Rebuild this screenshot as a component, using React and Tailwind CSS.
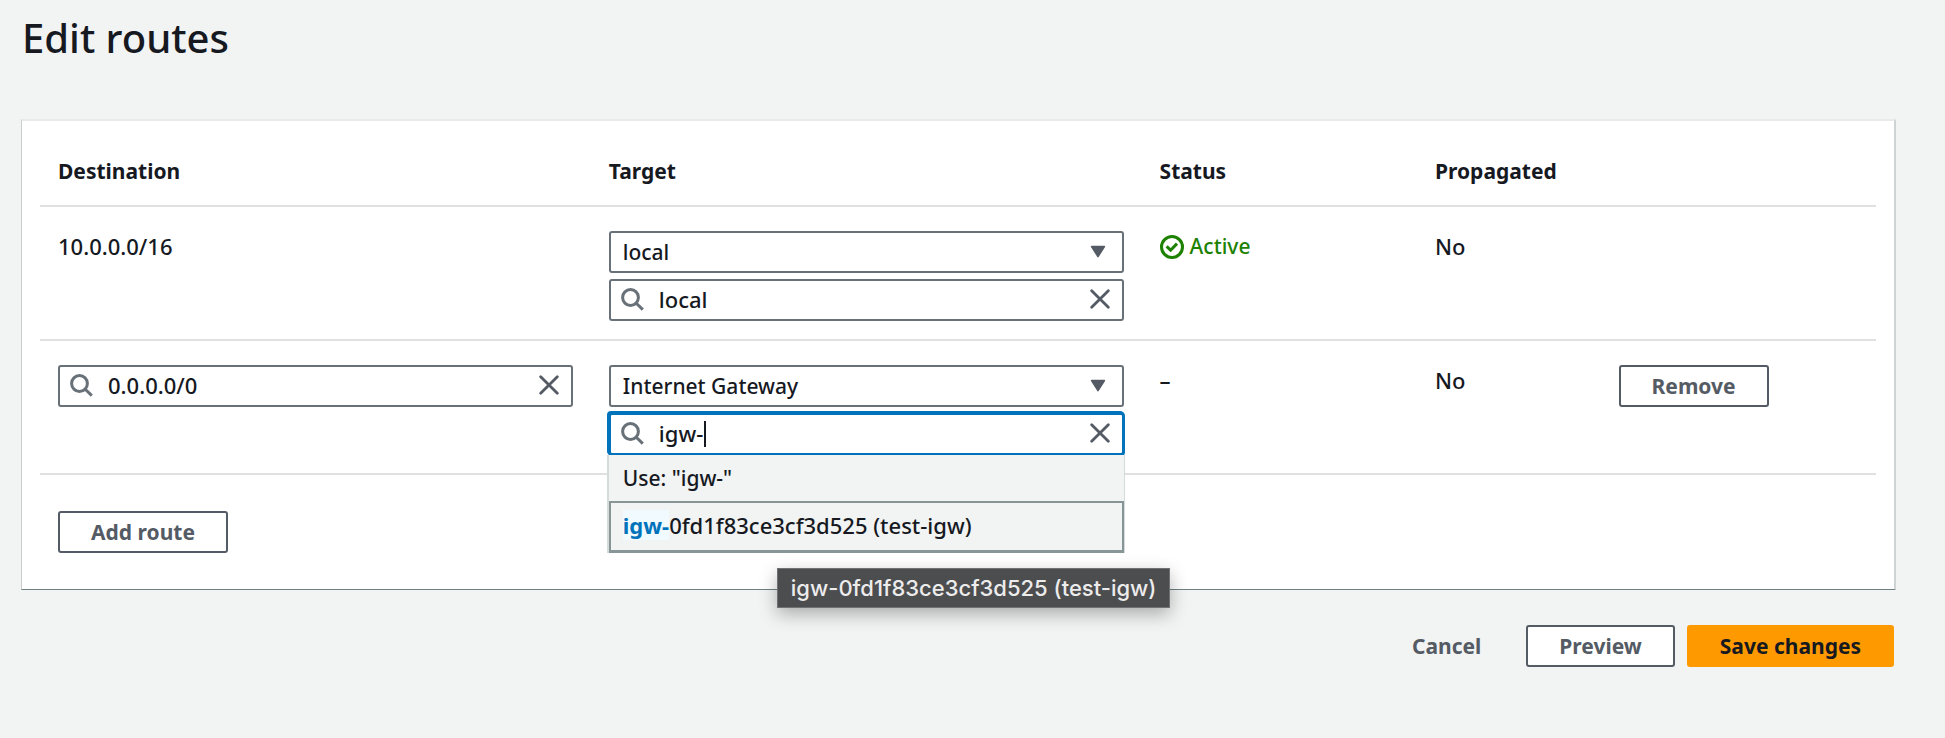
import { useState } from "react";

function SearchIcon() {
  return (
    <svg viewBox="0 0 23 24" className="h-6 w-[23px] shrink-0" fill="none" stroke="#687078" strokeWidth="3" aria-hidden="true">
      <circle cx="9.5" cy="9.5" r="7.9" />
      <path d="M15 15 L21.8 21.6" />
    </svg>
  );
}

function CloseIcon() {
  return (
    <svg viewBox="0 0 20 22" className="h-[22px] w-5" fill="none" stroke="#545b64" strokeWidth="2.8" strokeLinecap="round" aria-hidden="true">
      <path d="M1.7 1.7 L18.3 18.3 M18.3 1.7 L1.7 18.3" />
    </svg>
  );
}

function CaretDownIcon() {
  return (
    <svg viewBox="0 0 16 14" className="pointer-events-none h-3.5 w-4" aria-hidden="true">
      <path d="M1.6 1.6 H14.4 L8 11.6 Z" fill="#545b64" stroke="#545b64" strokeWidth="1.6" strokeLinejoin="round" />
    </svg>
  );
}

function CheckCircleIcon() {
  return (
    <svg viewBox="0 0 24 24" className="size-6 shrink-0" fill="none" stroke="#1d8102" strokeWidth="3" aria-hidden="true">
      <circle cx="12" cy="12" r="10.5" />
      <path d="M6.6 11.4 L10.6 15.2 L17 8.6" />
    </svg>
  );
}

function SelectBox({ label, value, options }) {
  const [selected, setSelected] = useState(value);
  return (
    <div className="grid items-center">
      <select
        aria-label={label}
        value={selected}
        onChange={(e) => setSelected(e.target.value)}
        className="col-start-1 row-start-1 h-[42px] w-full appearance-none rounded-[3px] border-2 border-[#687078] bg-white pr-12 pl-3 text-[21px] font-medium outline-none"
      >
        {options.map((o) => (
          <option key={o}>{o}</option>
        ))}
      </select>
      <span className="pointer-events-none col-start-1 row-start-1 mr-[18px] justify-self-end">
        <CaretDownIcon />
      </span>
    </div>
  );
}

function SearchBox({ label, value, active }) {
  const [text, setText] = useState(value);
  return (
    <div
      className={
        "flex h-[42px] items-center rounded-[3px] border-2 bg-white pl-2.5 pr-3 " +
        (active
          ? "border-[#0073bb] shadow-[0_0_0_1px_#0073bb,-1px_-1px_0_1px_#0073bb]"
          : "border-[#687078]")
      }
    >
      <SearchIcon />
      <input
        type="text"
        aria-label={label}
        value={text}
        onChange={(e) => setText(e.target.value)}
        className="ml-[15px] h-full min-w-0 flex-1 bg-transparent pb-0.5 text-[22px] font-medium outline-none"
      />
      <button type="button" aria-label={"Clear " + label} onClick={() => setText("")}>
        <CloseIcon />
      </button>
    </div>
  );
}

function Button({ variant = "normal", children }) {
  const styles = {
    normal: "border-[#545b64] bg-white text-[#545b64]",
    link: "border-transparent text-[#545b64]",
    primary: "border-[#ff9900] bg-[#ff9900] text-[#16191f]",
  };
  return (
    <button
      type="button"
      className={"h-[42px] rounded-[3px] border-2 px-[31px] text-[21px] leading-7 font-bold whitespace-nowrap " + styles[variant]}
    >
      {children}
    </button>
  );
}

function SuggestionList() {
  return (
    <ul
      role="listbox"
      aria-label="Internet gateways"
      className="absolute top-[42px] -right-px -left-0.5 z-10 border-r border-l-2 border-[#d5dbdb] bg-[#f2f3f3] text-[22px] leading-7"
    >
      <li role="option" aria-selected="false" className="px-3.5 py-[9px] text-[21px]">
        Use: "igw-"
      </li>
      <li role="option" aria-selected="true" className="border-2 border-b-3 border-[#879596] px-3 pt-2 pb-[11px] whitespace-nowrap">
        <mark className="bg-[#f1faff] font-bold text-[#0073bb]">igw-</mark>0fd1f83ce3cf3d525 (test-igw)
      </li>
    </ul>
  );
}

const targets = ["local", "Internet Gateway"];
const headCell = "border-b-2 border-[#e0e0e0] px-[18px] pt-9 pb-5 text-left text-[21px] leading-7 font-bold";
const cell = "border-b-2 border-[#e0e0e0] px-[18px] pt-6 pb-[18px] align-top leading-[31px]";

export default function App() {
  return (
    <main className="min-h-screen bg-[#f2f3f3] pr-[49px] pl-[21px] font-['Noto_Sans',sans-serif] text-[22px] font-medium text-[#16191f]">
      <h1 className="px-px pt-2.5 pb-[53px] text-[40px] leading-14 font-medium">Edit routes</h1>

      <section className="border-t-2 border-r-2 border-b border-l border-t-[#e8eaea] border-r-[#d0d3d3] border-b-[#6f8083] border-l-[#c9cdcd] bg-white px-[18px]">
        <table className="w-full table-fixed border-separate border-spacing-0">
          <colgroup>
            <col className="w-[30%]" />
            <col className="w-[30%]" />
            <col className="w-[15%]" />
            <col className="w-[10%]" />
            <col className="w-[15%]" />
          </colgroup>
          <thead>
            <tr>
              <th scope="col" className={headCell}>Destination</th>
              <th scope="col" className={headCell}>Target</th>
              <th scope="col" className={headCell}>Status</th>
              <th scope="col" className={headCell}>Propagated</th>
              <td className={headCell}></td>
            </tr>
          </thead>
          <tbody>
            <tr>
              <td className={cell}>10.0.0.0/16</td>
              <td className={cell}>
                <div className="flex flex-col gap-1.5">
                  <SelectBox label="Target type for 10.0.0.0/16" value="local" options={targets} />
                  <SearchBox label="Target for 10.0.0.0/16" value="local" />
                </div>
              </td>
              <td className={cell}>
                <span className="flex items-center gap-1.5 text-[21px] text-[#1d8102]">
                  <CheckCircleIcon />
                  Active
                </span>
              </td>
              <td className={cell}>No</td>
              <td className={cell}></td>
            </tr>
            <tr>
              <td className={cell}>
                <SearchBox label="Destination" value="0.0.0.0/0" />
              </td>
              <td className={cell}>
                <div className="flex flex-col gap-1.5">
                  <SelectBox label="Target type for 0.0.0.0/0" value="Internet Gateway" options={targets} />
                  <div className="relative">
                    <SearchBox label="Target for 0.0.0.0/0" value="igw-" active />
                    <span className="absolute top-2 left-[95px] h-[26px] w-0.5 bg-[#16191f]" />
                    <SuggestionList />
                    <div
                      role="tooltip"
                      className="absolute top-[155px] left-[168px] z-20 border border-[#707172] bg-[#4c4d4f] px-[13px] py-1.5 font-[Inter,sans-serif] text-[22px] leading-[26px] whitespace-nowrap text-[#ececec] shadow-[0_6px_18px_rgba(0,0,0,0.3)]"
                    >
                      igw-0fd1f83ce3cf3d525 (test-igw)
                    </div>
                  </div>
                </div>
              </td>
              <td className={cell}>–</td>
              <td className={cell}>No</td>
              <td className={cell}>
                <Button>Remove</Button>
              </td>
            </tr>
          </tbody>
        </table>
        <div className="flex px-[18px] py-9">
          <Button>Add route</Button>
        </div>
      </section>

      <footer className="flex justify-end gap-3 pt-[35px] pr-0.5">
        <Button variant="link">Cancel</Button>
        <Button>Preview</Button>
        <Button variant="primary">Save changes</Button>
      </footer>
    </main>
  );
}
